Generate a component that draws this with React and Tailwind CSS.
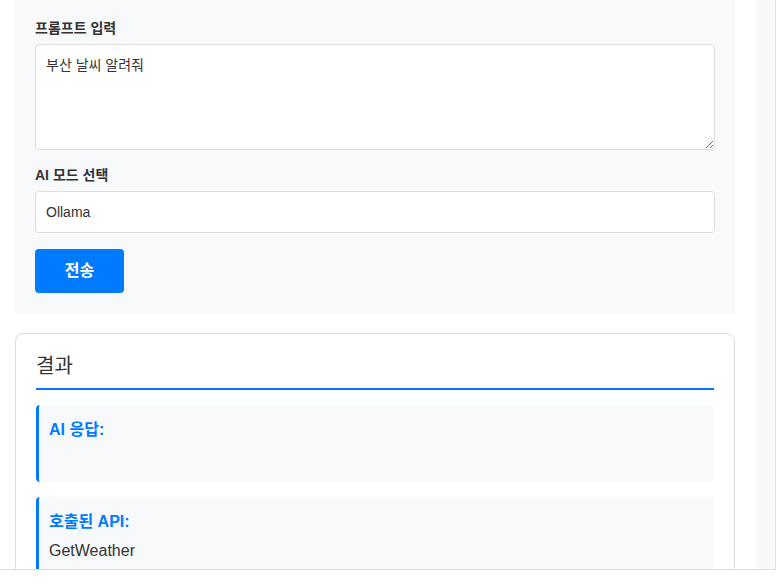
export default function App() {
  const font = "font-['Liberation_Sans','Noto_Sans_CJK_KR',sans-serif]";
  return (
    <div className={`w-[776px] h-[586px] bg-white overflow-hidden text-[#333] ${font}`}>
      <div className="flex h-[570px] border-b border-[#dedede]">
        <div className="w-[750px] overflow-hidden px-[15px]">
          <div className="bg-[#f8f9fa] px-[20px] pt-[18px] pb-[20px]">
            <label className="block text-[14px] font-bold leading-[21px] mb-[5px]">프롬프트 입력</label>
            <textarea
              readOnly
              defaultValue="부산 날씨 알려줘"
              className="block w-full h-[106px] bg-white border border-[#ddd] rounded-[4px] p-[10px] text-[14px] leading-[21px] text-[#333] outline-none"
            />
            <label className="block text-[14px] font-bold leading-[21px] mt-[15px] mb-[5px]">AI 모드 선택</label>
            <div className="flex items-center h-[42px] bg-white border border-[#ddd] rounded-[4px] px-[10px] pt-[1px] text-[14px]">
              Ollama
            </div>
            <button className="mt-[16px] w-[89px] h-[44px] bg-[#007bff] text-white text-[16px] font-bold rounded-[4px]">
              전송
            </button>
          </div>
          <div className="mt-[20px] border border-[#ddd] rounded-[8px] p-[20px]">
            <h2 className="text-[20px] leading-[24px] pb-[10px] border-b-2 border-[#007bff] mb-[15px]">결과</h2>
            <div className="bg-[#f8f9fa] border-l-[3px] border-[#007bff] rounded-[4px] pt-[15px] pb-[15px] pl-[10px] pr-[10px]">
              <h4 className="text-[16px] font-bold leading-[19px] text-[#007bff] mb-[8px]">AI 응답:</h4>
              <div className="h-[20px]"></div>
            </div>
            <div className="mt-[15px] bg-[#f8f9fa] border-l-[3px] border-[#007bff] rounded-[4px] pt-[15px] pb-[15px] pl-[10px] pr-[10px]">
              <h4 className="text-[16px] font-bold leading-[19px] text-[#007bff] mb-[8px]">호출된 API:</h4>
              <p className="text-[16px] leading-[24px]">GetWeather</p>
            </div>
          </div>
        </div>
        <div className="w-[6px]"></div>
        <div className="w-[20px] bg-[#f8f8f8] border-r border-[#e3e3e3]"></div>
      </div>
    </div>
  );
}
